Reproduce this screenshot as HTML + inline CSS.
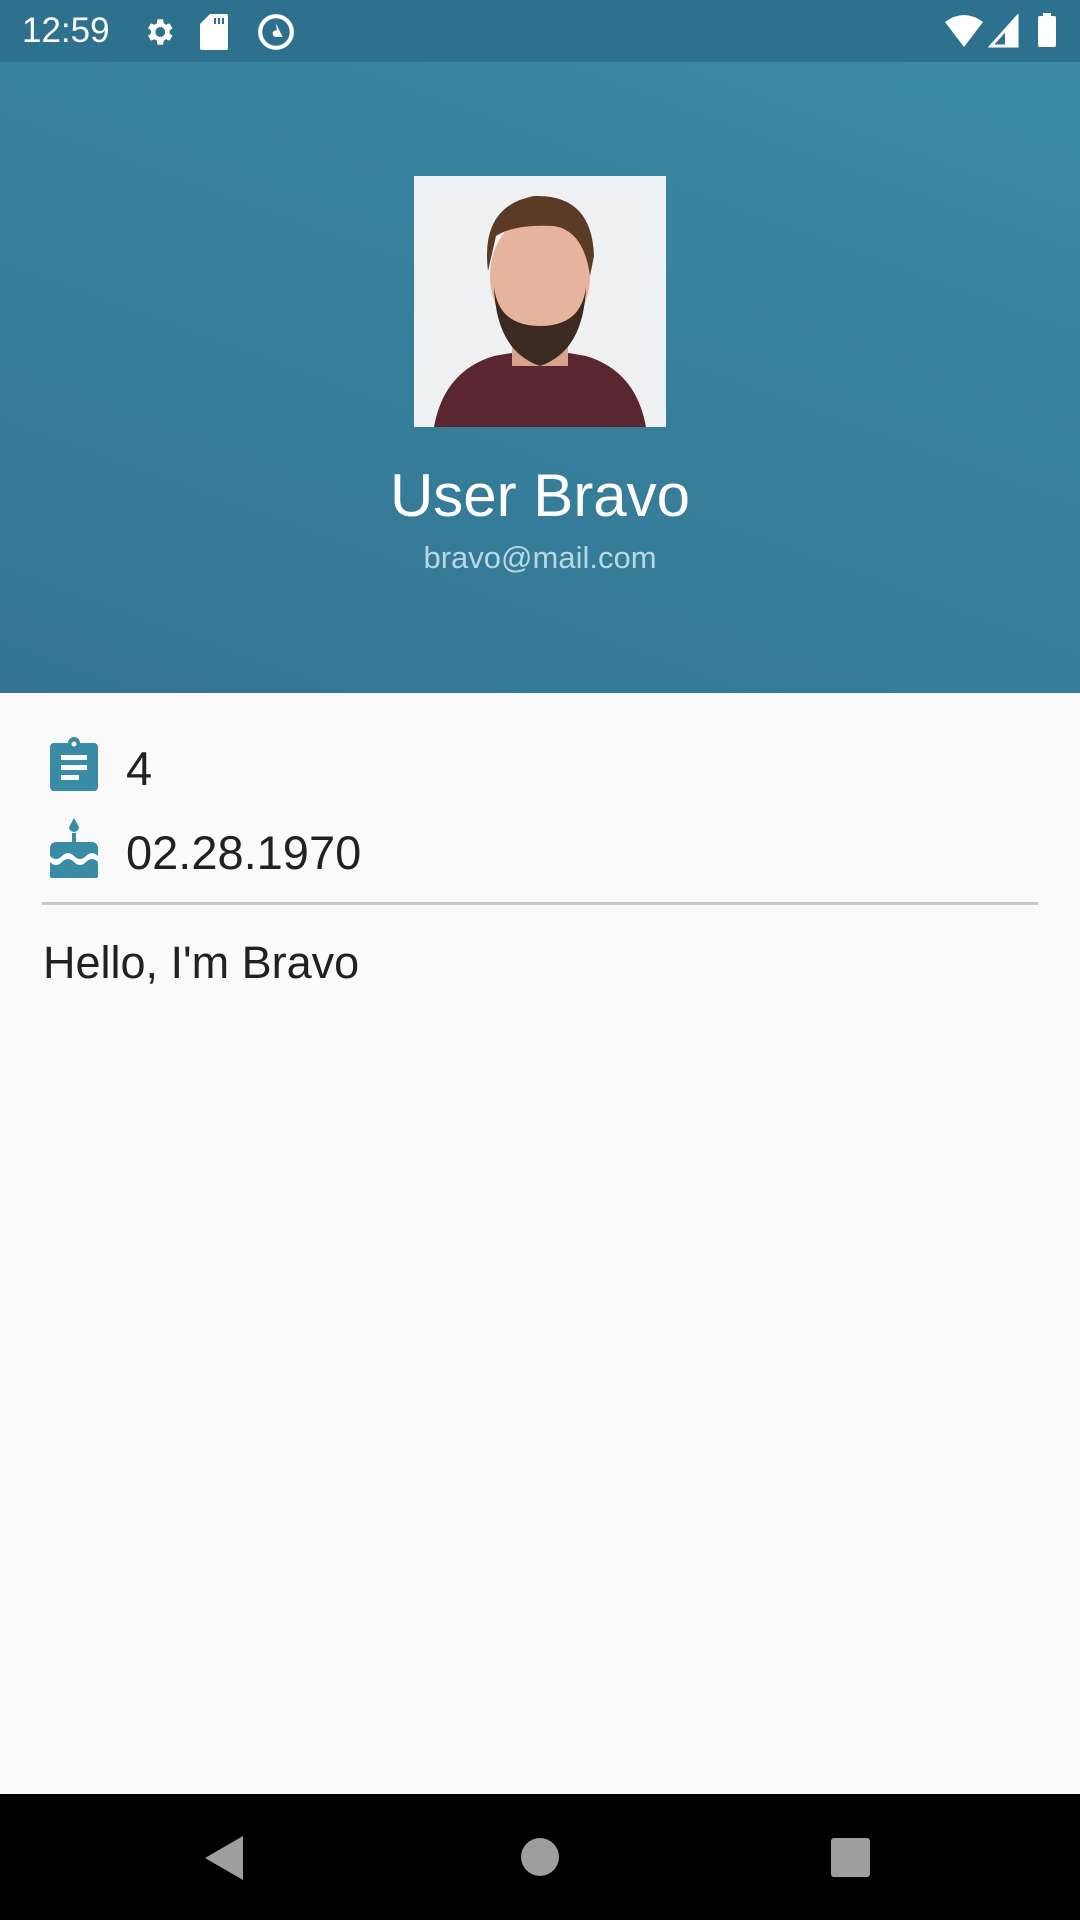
<!DOCTYPE html>
<html><head><meta charset="utf-8"><style>
*{margin:0;padding:0;box-sizing:border-box}
body{width:1080px;height:1920px;overflow:hidden;background:#fafafa;font-family:"Liberation Sans","DejaVu Sans",sans-serif;position:relative}
.sb{position:absolute;left:0;top:0;width:1080px;height:62px;background:#2e718f;color:#fff}
.hdr{position:absolute;left:0;top:62px;width:1080px;height:631px;background:linear-gradient(200deg,#3b8ba6 0%,#367f9b 50%,#337593 100%)}
.abs{position:absolute}
.t{position:absolute;color:#212121;font-size:47px;line-height:1}
.nav{position:absolute;left:0;top:1794px;width:1080px;height:126px;background:#000}
</style></head><body>
<div class="sb">
 <div class="abs" style="left:22px;top:13px;font-size:35px;line-height:1">12:59</div>
 <svg class="abs" style="left:142px;top:15px" width="34" height="34" viewBox="0 0 24 24"><path fill="#fff" d="M19.4 13a7.5 7.5 0 0 0 0-2l2.1-1.6-2-3.5-2.5 1a7 7 0 0 0-1.7-1L14.9 3h-4l-.4 2.9a7 7 0 0 0-1.7 1l-2.5-1-2 3.5L6.4 11a7.5 7.5 0 0 0 0 2l-2.1 1.6 2 3.5 2.5-1a7 7 0 0 0 1.7 1l.4 2.9h4l.4-2.9a7 7 0 0 0 1.7-1l2.5 1 2-3.5zM12.9 15.5a3.5 3.5 0 1 1 0-7 3.5 3.5 0 0 1 0 7z"/></svg>
 <svg class="abs" style="left:200px;top:14px" width="28" height="36" viewBox="0 0 14 18"><path fill="#fff" d="M5 0h8a1 1 0 0 1 1 1v16a1 1 0 0 1-1 1H1a1 1 0 0 1-1-1V5z"/><path fill="#2e718f" d="M7 2h1v3H7zM9 2h1v3H9zM11 2h1v3h-1z"/></svg>
 <svg class="abs" style="left:256px;top:12px" width="40" height="40" viewBox="0 0 24 24"><circle cx="12" cy="12" r="9.5" fill="none" stroke="#fff" stroke-width="2.5"/><path d="M12 7l4 8h-3z" fill="#fff"/><circle cx="12" cy="13" r="2" fill="#fff"/></svg>
 <svg class="abs" style="left:944px;top:14px" width="40" height="34" viewBox="0 0 40 34"><path fill="#fff" d="M1 8Q20-6 39 8L20 33z"/></svg>
 <svg class="abs" style="left:988px;top:14px" width="32" height="34" viewBox="0 0 32 34"><path fill="none" stroke="#fff" stroke-width="3" d="M29 3v29H3z"/><path fill="#fff" d="M29 3v29H17V17z"/></svg>
 <div class="abs" style="left:1038px;top:16px;width:18px;height:31px;background:#fff;border-radius:2px"></div>
 <div class="abs" style="left:1043px;top:13px;width:8px;height:4px;background:#fff"></div>
</div>
<div class="hdr">
 <svg class="abs" style="left:414px;top:114px" width="252" height="251" viewBox="0 0 252 251">
  <rect width="252" height="251" fill="#eef0f2"/>
  <path d="M20 251Q30 195 80 180L126 172 172 180Q222 195 232 251z" fill="#5a2630"/>
  <rect x="98" y="130" width="56" height="60" fill="#d9a48c"/>
  <ellipse cx="126" cy="100" rx="50" ry="62" fill="#e6b49c"/>
  <path d="M80 110Q82 175 126 190Q170 175 172 110Q168 150 126 150Q84 150 80 110z" fill="#3a2a22"/>
  <path d="M74 95Q66 30 120 20Q178 18 180 80L176 100Q170 55 140 50Q100 48 82 60z" fill="#5b3a26"/>
 </svg>
 <div class="abs" style="left:0;width:1080px;top:404px;text-align:center;color:#fff;font-size:60px;line-height:1">User Bravo</div>
 <div class="abs" style="left:0;width:1080px;top:480px;text-align:center;color:#b9d7e2;font-size:31px;line-height:1">bravo@mail.com</div>
</div>
<svg class="abs" style="left:50px;top:737px" width="48" height="54" viewBox="0 0 48 54"><path fill="#3a8ca6" d="M4 6h14a6 6 0 0 1 12 0h14a4 4 0 0 1 4 4v40a4 4 0 0 1-4 4H4a4 4 0 0 1-4-4V10a4 4 0 0 1 4-4z"/><circle cx="24" cy="7" r="2.5" fill="#fafafa"/><rect x="11" y="18" width="26" height="5" fill="#fafafa"/><rect x="11" y="28" width="26" height="5" fill="#fafafa"/><rect x="11" y="38" width="18" height="5" fill="#fafafa"/></svg>
<div class="t" style="left:126px;top:745px">4</div>
<svg class="abs" style="left:50px;top:818px" width="48" height="60" viewBox="0 0 48 60"><path fill="#3a8ca6" d="M24 0l5 9a5 5 0 0 1-10 0z"/><rect x="22" y="15" width="4" height="9" fill="#3a8ca6"/><path fill="#3a8ca6" d="M6 24h36a6 6 0 0 1 6 6v8Q42 32 36 38Q30 44 24 38Q18 32 12 38Q6 44 0 38v-8a6 6 0 0 1 6-6z"/><path fill="#3a8ca6" d="M0 44Q6 50 12 44Q18 38 24 44Q30 50 36 44Q42 38 48 44v14a2 2 0 0 1-2 2H2a2 2 0 0 1-2-2z"/></svg>
<div class="t" style="left:126px;top:829px">02.28.1970</div>
<div class="abs" style="left:42px;top:902px;width:996px;height:3px;background:#c8c8c8"></div>
<div class="t" style="left:43px;top:940px;font-size:45px">Hello, I'm Bravo</div>
<div class="nav">
 <svg class="abs" style="left:205px;top:42px" width="40" height="44" viewBox="0 0 40 44"><path fill="#9e9e9e" d="M38 0v44L0 22z"/></svg>
 <div class="abs" style="left:521px;top:44px;width:38px;height:38px;border-radius:50%;background:#9e9e9e"></div>
 <div class="abs" style="left:831px;top:44px;width:39px;height:39px;border-radius:3px;background:#9e9e9e"></div>
</div>
</body></html>
